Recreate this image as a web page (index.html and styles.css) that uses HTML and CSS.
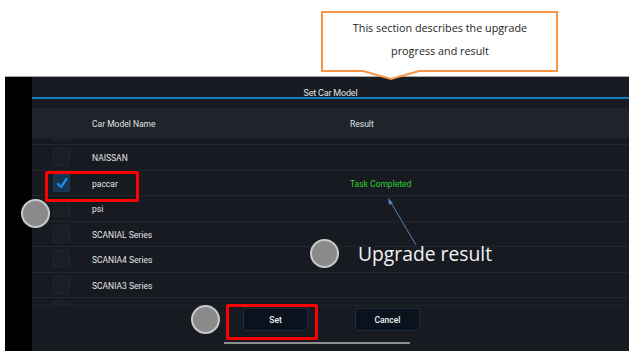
FILE: index.html
```html
<!DOCTYPE html>
<html lang="en">
<head>
  <meta charset="UTF-8">
  <title>Set Car Model</title>
  <link rel="stylesheet" href="styles.css">
</head>
<body>
  <!-- Callout over the title -->
  <div class="callout">
    <svg class="callout-shape" width="238" height="72" viewBox="0 0 238 72">
      <path d="M1 1 H236 V60 H98 L70 68 L42 60 H1 Z" fill="#fff" stroke="#f79646" stroke-width="2"/>
    </svg>
    <p class="callout-text">This section describes the upgrade<br>progress and result</p>
  </div>

  <div class="screen">
    <div class="side"></div>
    <div class="main">
      <div class="title-bar">Set Car Model</div>
      <div class="header">
        <span class="col-name">Car Model Name</span>
        <span class="col-result">Result</span>
      </div>

      <div class="list">
        <div class="rows">
          <div class="row"><span class="check"></span><span class="col-name"></span></div>
          <div class="row"><span class="check"></span><span class="col-name">NAISSAN</span></div>
          <div class="row">
            <span class="check checked">
              <svg width="14" height="14" viewBox="0 0 14 14"><path d="M3 8 L6 11 L11.5 3" fill="none" stroke="#1e88e5" stroke-width="2.4" stroke-linecap="round" stroke-linejoin="round"/></svg>
            </span>
            <span class="col-name">paccar</span>
            <span class="col-result done">Task Completed</span>
          </div>
          <div class="row"><span class="check"></span><span class="col-name">psi</span></div>
          <div class="row"><span class="check"></span><span class="col-name">SCANIAL Series</span></div>
          <div class="row"><span class="check"></span><span class="col-name">SCANIA4 Series</span></div>
          <div class="row"><span class="check"></span><span class="col-name">SCANIA3 Series</span></div>
          <div class="row"><span class="check"></span><span class="col-name"></span></div>
        </div>
      </div>

      <div class="footer">
        <div class="buttons">
          <button class="btn">Set</button>
          <button class="btn">Cancel</button>
        </div>
        <div class="home-bar"></div>
      </div>
    </div>
  </div>

  <!-- Annotations -->
  <div class="mark mark-row"></div>
  <div class="mark mark-set"></div>
  <span class="dot dot-row"></span>
  <span class="dot dot-result"></span>
  <span class="dot dot-set"></span>
  <span class="note">Upgrade result</span>
  <svg class="arrow" width="40" height="50" viewBox="0 0 40 50">
    <path d="M32 48 L6 4" stroke="#4f81bd" stroke-width="1" fill="none"/>
    <path d="M4 1 L5 8 L9 6 Z" fill="#4f81bd"/>
  </svg>
</body>
</html>
```

FILE: styles.css
```css
* {
  margin: 0;
  padding: 0;
  box-sizing: border-box;
}

body {
  background: #ffffff;
  font-family: Roboto, 'Liberation Sans', sans-serif;
  width: 635px;
  height: 360px;
  position: relative;
  overflow: hidden;
  padding: 76px 0 0 5px;
}

/* Callout */
.callout {
  position: absolute;
  left: 321px;
  top: 11px;
  width: 238px;
  height: 72px;
  z-index: 5;
}

.callout-shape {
  position: absolute;
  left: 0;
  top: 0;
}

.callout-text {
  position: relative;
  font-family: 'Open Sans', 'Liberation Sans', sans-serif;
  font-size: 10.8px;
  line-height: 23px;
  color: #1e1e1e;
  text-align: center;
  padding-top: 5px;
}

/* Device screen */
.screen {
  display: flex;
  width: 624px;
  height: 275px;
  border-top: 1px solid #a9a9a9;
}

.side {
  width: 27px;
  background: #000000;
}

.main {
  flex: 1;
  display: flex;
  flex-direction: column;
  background: #171b21;
}

.title-bar {
  height: 22px;
  border-bottom: 2px solid #157ac0;
  text-align: center;
  color: #e2e4e6;
  font-size: 9px;
  line-height: 32px;
  letter-spacing: -0.2px;
}

.header {
  display: flex;
  align-items: center;
  height: 30px;
  margin-top: 9px;
  padding-top: 2px;
  background: #1f242a;
  color: #dfe1e3;
  font-size: 8.5px;
}

.col-name {
  width: 258px;
  margin-left: 60px;
}

.col-result {
  flex: 1;
}

.list {
  height: 167px;
  overflow: hidden;
}

.rows {
  margin-top: -19.5px;
}

.row {
  display: flex;
  align-items: center;
  height: 25.5px;
  border-top: 1px solid #22272e;
  color: #e4e6e8;
  font-size: 8.5px;
}

.row .col-name,
.row .col-result {
  padding-top: 2px;
}

.row .col-name {
  margin-left: 0;
  width: 258px;
}

.check {
  width: 17px;
  height: 18px;
  margin: 0 22px 0 21px;
  background: #1a1f25;
  border: 1px solid #1f252c;
  border-radius: 1px;
  display: flex;
  align-items: center;
  justify-content: center;
}

.check.checked {
  background: #173450;
  border-color: #1b3b5a;
}

.done {
  color: #2fd12f;
}

.footer {
  flex: 1;
  display: flex;
  flex-direction: column;
  border-top: 1px solid #1f242a;
  padding-top: 2px;
}

.buttons {
  display: flex;
  justify-content: center;
  gap: 47px;
  margin-left: 2px;
}

.btn {
  width: 65px;
  height: 23px;
  background: #0a131d;
  border: 1px solid #1d2b3a;
  border-radius: 3px;
  color: #eef0f2;
  font-family: Roboto, 'Liberation Sans', sans-serif;
  font-size: 8.5px;
  font-weight: 500;
}

.home-bar {
  width: 186px;
  height: 2px;
  margin: 11px 0 0 192px;
  background: #8d8f91;
}

/* Annotations */
.mark {
  position: absolute;
  border: 3px solid #ff0000;
  border-radius: 2px;
}

.mark-row {
  left: 45px;
  top: 171px;
  width: 94px;
  height: 31px;
}

.mark-set {
  left: 226px;
  top: 304px;
  width: 92px;
  height: 36px;
}

.dot {
  position: absolute;
  width: 29px;
  height: 29px;
  border-radius: 50%;
  background: #8a8a8a;
  border: 2px solid #c9c9c9;
}

.dot-row {
  left: 21px;
  top: 199px;
}

.dot-result {
  left: 310px;
  top: 239px;
}

.dot-set {
  left: 191px;
  top: 305px;
}

.note {
  position: absolute;
  left: 358px;
  top: 240px;
  font-family: 'Open Sans', 'Liberation Sans', sans-serif;
  font-size: 19.3px;
  color: #f2f2f2;
}

.arrow {
  position: absolute;
  left: 384px;
  top: 197px;
}
```
